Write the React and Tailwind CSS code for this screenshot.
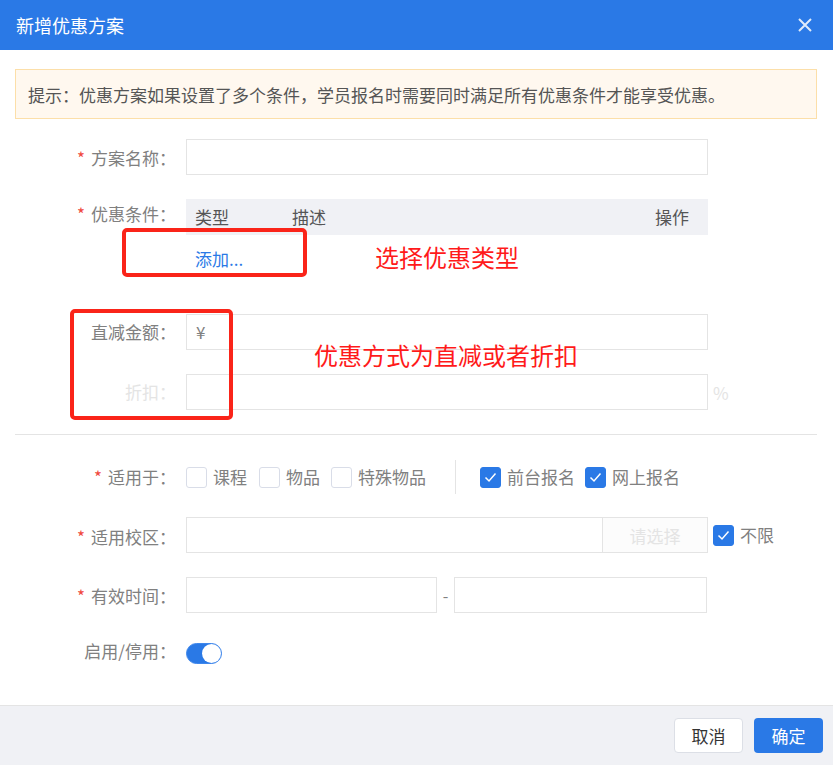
import React from "react";

const font = { fontFamily: '"Noto Sans CJK SC", "Noto Sans", sans-serif' };

function Label({ req, dim, children, className = "" }) {
  return (
    <div className={`w-[171px] shrink-0 pr-[10px] text-right text-[17px] ${dim ? "text-[#e4e4e4]" : "text-[#808080]"} ${className}`}>
      {req && <span className="mr-[6px] text-[#f0483e]">*</span>}
      {children}：
    </div>
  );
}

function Box({ className = "", children }) {
  return <div className={`h-[36px] border border-[#e4e4e4] bg-white ${className}`}>{children}</div>;
}

function Check({ checked, label, className = "" }) {
  return (
    <label className={`flex items-center ${className}`}>
      <span className={`flex h-[21px] w-[21px] items-center justify-center rounded-[3px] border ${checked ? "border-[#2a79e6] bg-[#2a79e6]" : "border-[#d9dde8] bg-white"}`}>
        {checked && (
          <svg width="13" height="11" viewBox="0 0 13 11" fill="none">
            <path d="M1.5 5.5 L5 9 L11.5 1.5" stroke="#fff" strokeWidth="1.5" />
          </svg>
        )}
      </span>
      <span className="ml-[6px] text-[17px] leading-[22px] text-[#808080]">{label}</span>
    </label>
  );
}

export default function App() {
  return (
    <div style={font} className="relative flex h-[765px] w-[833px] flex-col overflow-hidden bg-white">
      <header className="flex h-[50px] shrink-0 items-center justify-between bg-[#2a79e6] pl-[16px] pr-[20px]">
        <h1 className="text-lg font-normal text-white">新增优惠方案</h1>
        <svg width="16" height="16" viewBox="0 0 16 16" fill="none" className="opacity-85">
          <path d="M2 2 L14 14 M14 2 L2 14" stroke="#fff" strokeWidth="2" />
        </svg>
      </header>

      <main className="flex-1 pl-[15px] pr-[16px] pt-[19px]">
        <div className="flex h-[50px] items-center border border-[#fcdfa9] bg-[#fff8ef] pl-[12px] pt-px text-[17px] text-[#555555]">
          提示：优惠方案如果设置了多个条件，学员报名时需要同时满足所有优惠条件才能享受优惠。
        </div>

        <div className="mt-[20px] flex h-[36px]">
          <Label req className="leading-[38px]">方案名称</Label>
          <Box className="w-[522px]" />
        </div>

        <div className="mt-[24px] flex">
          <Label req className="leading-[30px]">优惠条件</Label>
          <div className="w-[522px]">
            <div className="flex h-[36px] items-center bg-[#f0f1f5] text-[17px] text-[#555555]">
              <span className="w-[106px] pl-[9px]">类型</span>
              <span className="flex-1">描述</span>
              <span className="w-[53px]">操作</span>
            </div>
            <div className="pl-[9px] pt-[12px] text-[17px] leading-[24px] text-[#2a79e6]">添加...</div>
          </div>
        </div>

        <div className="mt-[43px] flex h-[36px]">
          <Label className="leading-[36px]">直减金额</Label>
          <Box className="w-[522px] pl-[9px] text-[17px] leading-[34px] text-[#808080]">¥</Box>
        </div>

        <div className="mt-[24px] flex h-[36px]">
          <Label dim className="leading-[36px]">折扣</Label>
          <Box className="w-[522px]" />
          <span className="ml-[5px] text-[17px] leading-[38px] text-[#e4e4e4]">%</span>
        </div>

        <div className="mt-[24px] h-px bg-[#e4e4e4]" />

        <div className="mt-[24px] flex h-[36px] items-center">
          <Label req className="leading-[36px]">适用于</Label>
          <Check label="课程" />
          <Check label="物品" className="ml-[12px]" />
          <Check label="特殊物品" className="ml-[11px]" />
          <span className="ml-[29px] h-[34px] w-px bg-[#e4e4e4]" />
          <Check checked label="前台报名" className="ml-[24px]" />
          <Check checked label="网上报名" className="ml-[10px]" />
        </div>

        <div className="mt-[22px] flex h-[36px]">
          <Label req className="leading-[40px]">适用校区</Label>
          <Box className="flex w-[522px] justify-end">
            <div className="w-[105px] border-l border-[#e4e4e4] bg-[#fcfcfc] text-center text-[17px] leading-[36px] text-[#e4e4e4]">请选择</div>
          </Box>
          <Check checked label="不限" className="ml-[5px]" />
        </div>

        <div className="mt-[24px] flex h-[36px]">
          <Label req className="leading-[38px]">有效时间</Label>
          <Box className="w-[251px]" />
          <span className="w-[17px] text-center text-base leading-[36px] text-[#808080]">-</span>
          <Box className="w-[253px]" />
        </div>

        <div className="mt-[30px] flex h-[21px]">
          <Label className="leading-[16px]">启用/停用</Label>
          <div className="flex h-[21px] w-[36px] items-center justify-end rounded-full border border-[#3f87ec] bg-[#2a79e6]">
            <span className="h-[19px] w-[19px] rounded-full bg-white" />
          </div>
        </div>
      </main>

      <footer className="flex h-[60px] shrink-0 items-center justify-end gap-[11px] border-t border-[#e4e4e4] bg-[#f0f1f5] pr-[10px]">
        <button className="h-[35px] w-[69px] rounded-[4px] border border-[#dcdfe6] bg-white text-[17px] text-[#333333]">取消</button>
        <button className="h-[35px] w-[69px] rounded-[4px] bg-[#2a79e6] text-[17px] text-white">确定</button>
      </footer>

      <div className="absolute left-[122px] top-[228px] h-[49px] w-[185px] rounded-[5px] border-[4px] border-[#fa2419]" />
      <div className="absolute left-[70px] top-[309px] h-[111px] w-[163px] rounded-[5px] border-[4px] border-[#fa2419]" />
      <div className="absolute left-[375px] top-[239px] text-2xl leading-[36px] text-[#ff1a1a]">选择优惠类型</div>
      <div className="absolute left-[314px] top-[337px] text-2xl leading-[36px] text-[#ff1a1a]">优惠方式为直减或者折扣</div>
    </div>
  );
}
